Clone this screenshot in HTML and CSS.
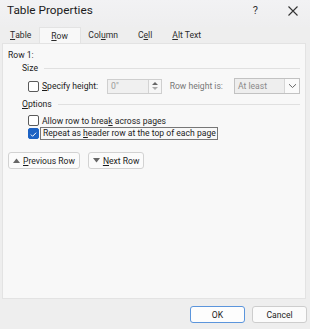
FILE: index.html
```html
<!DOCTYPE html>
<html>
<head>
<meta charset="utf-8">
<link rel="stylesheet" href="styles.css">
</head>
<body>
<div class="dialog">
  <div class="titlebar">
    <span class="title">Table Properties</span>
    <span class="tb-btns"><span class="help">?</span><span class="close"><svg width="10" height="10" viewBox="0 0 10 10"><path d="M0.5 0.5L9.5 9.5M9.5 0.5L0.5 9.5" stroke="#333" stroke-width="1.1"/></svg></span></span>
  </div>
  <div class="tabs">
    <span class="tab first"><u>T</u>able</span>
    <span class="tab active"><u>R</u>ow</span>
    <span class="tab">Col<u>u</u>mn</span>
    <span class="tab">C<u>e</u>ll</span>
    <span class="tab"><u>A</u>lt Text</span>
  </div>
  <div class="panel">
    <div class="rowlabel">Row 1:</div>
    <div class="group-head"><span>Size</span><span class="rule"></span></div>
    <div class="size-row">
      <span class="cb"></span>
      <span class="lbl"><u>S</u>pecify height:</span>
      <span class="numbox"><span class="numval">0"</span><span class="spin"><svg width="8" height="12" viewBox="0 0 8 12"><path d="M1 5L4 2L7 5Z" fill="#666"/><path d="M1 7L4 10L7 7Z" fill="#aaa"/></svg></span></span>
      <span class="lbl rh">Row height is:</span>
      <span class="select"><span class="selval">At least</span><span class="drop"><svg width="9" height="6" viewBox="0 0 9 6"><path d="M1 1.2L4.5 4.5L8 1.2" fill="none" stroke="#666" stroke-width="1"/></svg></span></span>
    </div>
    <div class="group-head opt"><span><u>O</u>ptions</span><span class="rule"></span></div>
    <div class="check-row"><span class="cb"></span><span class="lbl">Allow row to brea<u>k</u> across pages</span></div>
    <div class="check-row"><span class="cb checked"><svg width="11" height="11" viewBox="0 0 11 11"><path d="M2.3 5.6L4.4 7.7L8.7 3.3" fill="none" stroke="#fff" stroke-width="1.2"/></svg></span><span class="lbl focus">Repeat as <u>h</u>eader row at the top of each page</span></div>
    <div class="nav-row">
      <span class="btn"><svg width="7" height="5" viewBox="0 0 7 5"><path d="M0 5L3.5 0.5L7 5Z" fill="#666"/></svg><span><u>P</u>revious Row</span></span>
      <span class="btn"><svg width="7" height="5" viewBox="0 0 7 5"><path d="M0 0L3.5 4.5L7 0Z" fill="#666"/></svg><span><u>N</u>ext Row</span></span>
    </div>
  </div>
  <div class="footer">
    <span class="fbtn ok">OK</span>
    <span class="fbtn">Cancel</span>
  </div>
</div>
</body>
</html>
```
FILE: styles.css
```css
html, body {
  margin: 0;
  padding: 0;
  background: #eeeeee;
}
body {
  width: 310px;
  height: 329px;
  overflow: hidden;
  font-family: Roboto, "Noto Sans", sans-serif;
  font-size: 8.6px;
  color: #1c1c1c;
}
u { text-decoration: underline; text-underline-offset: 1px; }
.dialog {
  width: 310px;
  height: 329px;
  display: flex;
  flex-direction: column;
}
.titlebar {
  height: 27px;
  display: flex;
  align-items: center;
  justify-content: space-between;
  padding: 0 12px 0 7px;
  background: linear-gradient(#f2f2f4, #eeeeef);
}
.title {
  font-size: 11.8px;
  color: #1b1b1b;
  margin-top: -7px;
}
.tb-btns {
  display: flex;
  align-items: center;
  gap: 30px;
  margin-top: -6px;
}
.help { font-size: 11px; color: #333; }
.close { display: flex; }
.tabs {
  display: flex;
  height: 16px;
  margin-left: 2px;
}
.tab {
  height: 16px;
  display: flex;
  align-items: center;
  padding: 0 10px;
  color: #2b2b2b;
}
.tab.first { padding: 0 8px 0 8px; }
.tab.active {
  background: #f8f8f8;
  box-sizing: border-box;
  border: 1px solid #e3e3e3;
  border-bottom: none;
  width: 42px;
  padding: 0 0 0 11px;
  height: 16px;
}
.tab.active + .tab { padding-left: 7px; }
.panel {
  margin: 0 4px 0 2px;
  height: 256px;
  background: #f8f8f8;
  border: 1px solid #e3e3e3;
  padding: 5px 5px 0 5px;
  box-sizing: border-box;
}
.rowlabel { height: 12px; line-height: 12px; }
.group-head {
  display: flex;
  align-items: center;
  gap: 6px;
  margin-left: 14px;
  height: 12px;
  margin-top: 1px;
}
.group-head.opt { margin-top: 4px; }
.rule { flex: 1; border-top: 1px solid #e0e0e0; }
.size-row {
  display: flex;
  align-items: center;
  height: 16px;
  margin: 4px 0 0 20px;
}
.cb {
  width: 11px;
  height: 11px;
  box-sizing: border-box;
  border: 1px solid #5a5a5a;
  border-radius: 2px;
  background: #fff;
  flex: none;
  display: flex;
}
.cb.checked { background: #1c62c4; border-color: #1c62c4; }
.lbl { margin-left: 3px; white-space: nowrap; }
.numbox {
  margin-left: 9px;
  width: 57px;
  height: 15px;
  box-sizing: border-box;
  border: 1px solid #cfcfcf;
  background: #f0f0f0;
  display: flex;
  align-items: center;
  justify-content: space-between;
}
.numval { color: #9a9a9a; padding-left: 3px; }
.spin {
  width: 12px;
  height: 13px;
  border-left: 1px solid #d3d3d3;
  background: #f6f6f6;
  display: flex;
  align-items: center;
  justify-content: center;
}
.rh { margin-left: 8px; color: #777; }
.select {
  margin-left: 11px;
  width: 69px;
  height: 16px;
  box-sizing: border-box;
  border: 1px solid #c2c2c2;
  background: #eeeeee;
  display: flex;
  align-items: center;
  justify-content: space-between;
}
.selval { color: #8a8a8a; padding-left: 3px; }
.drop {
  width: 14px;
  height: 14px;
  background: #fafafa;
  border-left: 1px solid #d6d6d6;
  display: flex;
  align-items: center;
  justify-content: center;
}
.check-row {
  display: flex;
  align-items: center;
  height: 13px;
  margin-left: 20px;
}
.group-head.opt + .check-row { margin-top: 4px; }
.lbl.focus {
  margin-left: 1px;
  padding: 0 1px 0 2px;
  border: 1px solid #777;
  line-height: 11px;
}
.nav-row {
  display: flex;
  gap: 8px;
  margin-top: 12px;
}
.btn {
  height: 17px;
  box-sizing: border-box;
  border: 1px solid #d2d2d2;
  border-radius: 3px;
  background: #fbfbfb;
  display: flex;
  align-items: center;
  gap: 3px;
  padding: 0 4px 0 4px;
}
.footer {
  flex: 1;
  display: flex;
  justify-content: flex-end;
  align-items: flex-start;
  gap: 7px;
  padding: 7px 3px 0 0;
}
.fbtn {
  width: 55px;
  height: 17px;
  box-sizing: border-box;
  border: 1px solid #cdcdcd;
  border-radius: 3px;
  background: #fbfbfb;
  display: flex;
  align-items: center;
  justify-content: center;
}
.fbtn.ok { border: 1.5px solid #5b95dc; background: #fdfdfd; }
```
